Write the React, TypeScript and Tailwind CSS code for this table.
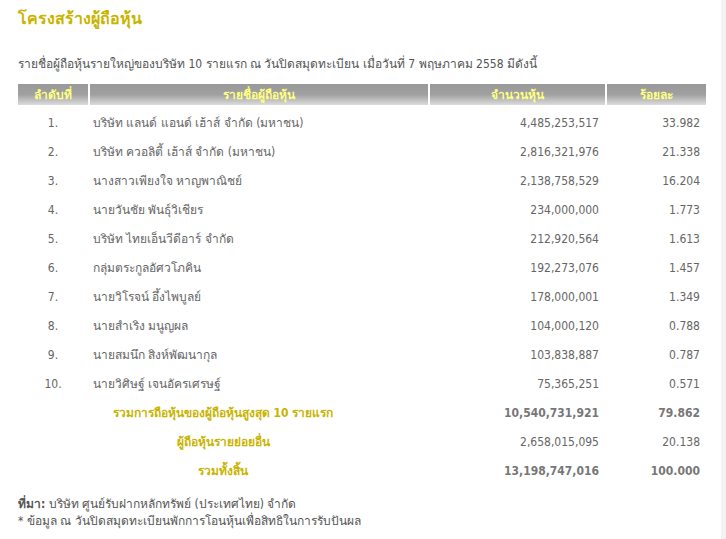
const rows = [
  ['1.', 'บริษัท แลนด์ แอนด์ เฮ้าส์ จำกัด (มหาชน)', '4,485,253,517', '33.982'],
  ['2.', 'บริษัท ควอลิตี้ เฮ้าส์ จำกัด (มหาชน)', '2,816,321,976', '21.338'],
  ['3.', 'นางสาวเพียงใจ หาญพาณิชย์', '2,138,758,529', '16.204'],
  ['4.', 'นายวันชัย พันธุ์วิเชียร', '234,000,000', '1.773'],
  ['5.', 'บริษัท ไทยเอ็นวีดีอาร์ จำกัด', '212,920,564', '1.613'],
  ['6.', 'กลุ่มตระกูลอัศวโภคิน', '192,273,076', '1.457'],
  ['7.', 'นายวิโรจน์ อึ้งไพบูลย์', '178,000,001', '1.349'],
  ['8.', 'นายสำเริง มนูญผล', '104,000,120', '0.788'],
  ['9.', 'นายสมนึก สิงห์พัฒนากุล', '103,838,887', '0.787'],
  ['10.', 'นายวิศิษฐ์ เจนอัครเศรษฐ์', '75,365,251', '0.571'],
];

const totals = [
  { label: 'รวมการถือหุ้นของผู้ถือหุ้นสูงสุด 10 รายแรก', shares: '10,540,731,921', pct: '79.862', bold: true },
  { label: 'ผู้ถือหุ้นรายย่อยอื่น', shares: '2,658,015,095', pct: '20.138', bold: false },
  { label: 'รวมทั้งสิ้น', shares: '13,198,747,016', pct: '100.000', bold: true },
];

const font = { fontFamily: 'Tahoma, "DejaVu Sans Condensed", "DejaVu Sans", sans-serif' };

function HeadCell({ children }: { children: React.ReactNode }) {
  return (
    <div className="h-[21px] flex items-center justify-center bg-gradient-to-b from-[#999999] via-[#a0a0a0] to-[#dcdcdc] text-[#ffff80] text-[12px] font-bold">
      {children}
    </div>
  );
}

export default function App() {
  return (
    <div className="w-[726px] h-[539px] flex bg-white overflow-hidden" style={font}>
      <div className="flex-1 pl-[18px] pt-[7px]">
        <h1 className="text-[16px] leading-[24px] font-bold text-[#c8b400]">โครงสร้างผู้ถือหุ้น</h1>
        <p className="mt-[25px] text-[12px] leading-[16px] text-[#555]">
          รายชื่อผู้ถือหุ้นรายใหญ่ของบริษัท 10 รายแรก ณ วันปิดสมุดทะเบียน เมื่อวันที่ 7 พฤษภาคม 2558 มีดังนี้
        </p>

        <div className="mt-[12px] grid grid-cols-[70px_338px_175px_99px] gap-x-[2px] text-[12px] text-[#666]">
          <HeadCell>ลำดับที่</HeadCell>
          <HeadCell>รายชื่อผู้ถือหุ้น</HeadCell>
          <HeadCell>จำนวนหุ้น</HeadCell>
          <HeadCell>ร้อยละ</HeadCell>

          <div className="col-span-4 h-[3px]" />

          {rows.map(r => (
            <div key={r[0]} className="contents">
              <div className="h-[29px] flex items-center justify-center">{r[0]}</div>
              <div className="h-[29px] flex items-center pl-[3px]">{r[1]}</div>
              <div className="h-[29px] flex items-center justify-end pr-[6px]">{r[2]}</div>
              <div className="h-[29px] flex items-center justify-end pr-[6px]">{r[3]}</div>
            </div>
          ))}

          {totals.map(t => (
            <div key={t.label} className="contents">
              <div className="col-span-2 h-[29px] flex items-center justify-center font-bold text-[#c8b400]">
                {t.label}
              </div>
              <div className={`h-[29px] flex items-center justify-end pr-[6px] ${t.bold ? 'font-bold text-[#777]' : ''}`}>
                {t.shares}
              </div>
              <div className={`h-[29px] flex items-center justify-end pr-[6px] ${t.bold ? 'font-bold text-[#777]' : ''}`}>
                {t.pct}
              </div>
            </div>
          ))}
        </div>

        <div className="mt-[11px] text-[12px] leading-[17px] text-[#555]">
          <p><span className="font-bold">ที่มา:</span> บริษัท ศูนย์รับฝากหลักทรัพย์ (ประเทศไทย) จำกัด</p>
          <p>* ข้อมูล ณ วันปิดสมุดทะเบียนพักการโอนหุ้นเพื่อสิทธิในการรับปันผล</p>
        </div>
      </div>
      <div className="w-[5px] h-full bg-[#f3f3f3]" />
    </div>
  );
}
